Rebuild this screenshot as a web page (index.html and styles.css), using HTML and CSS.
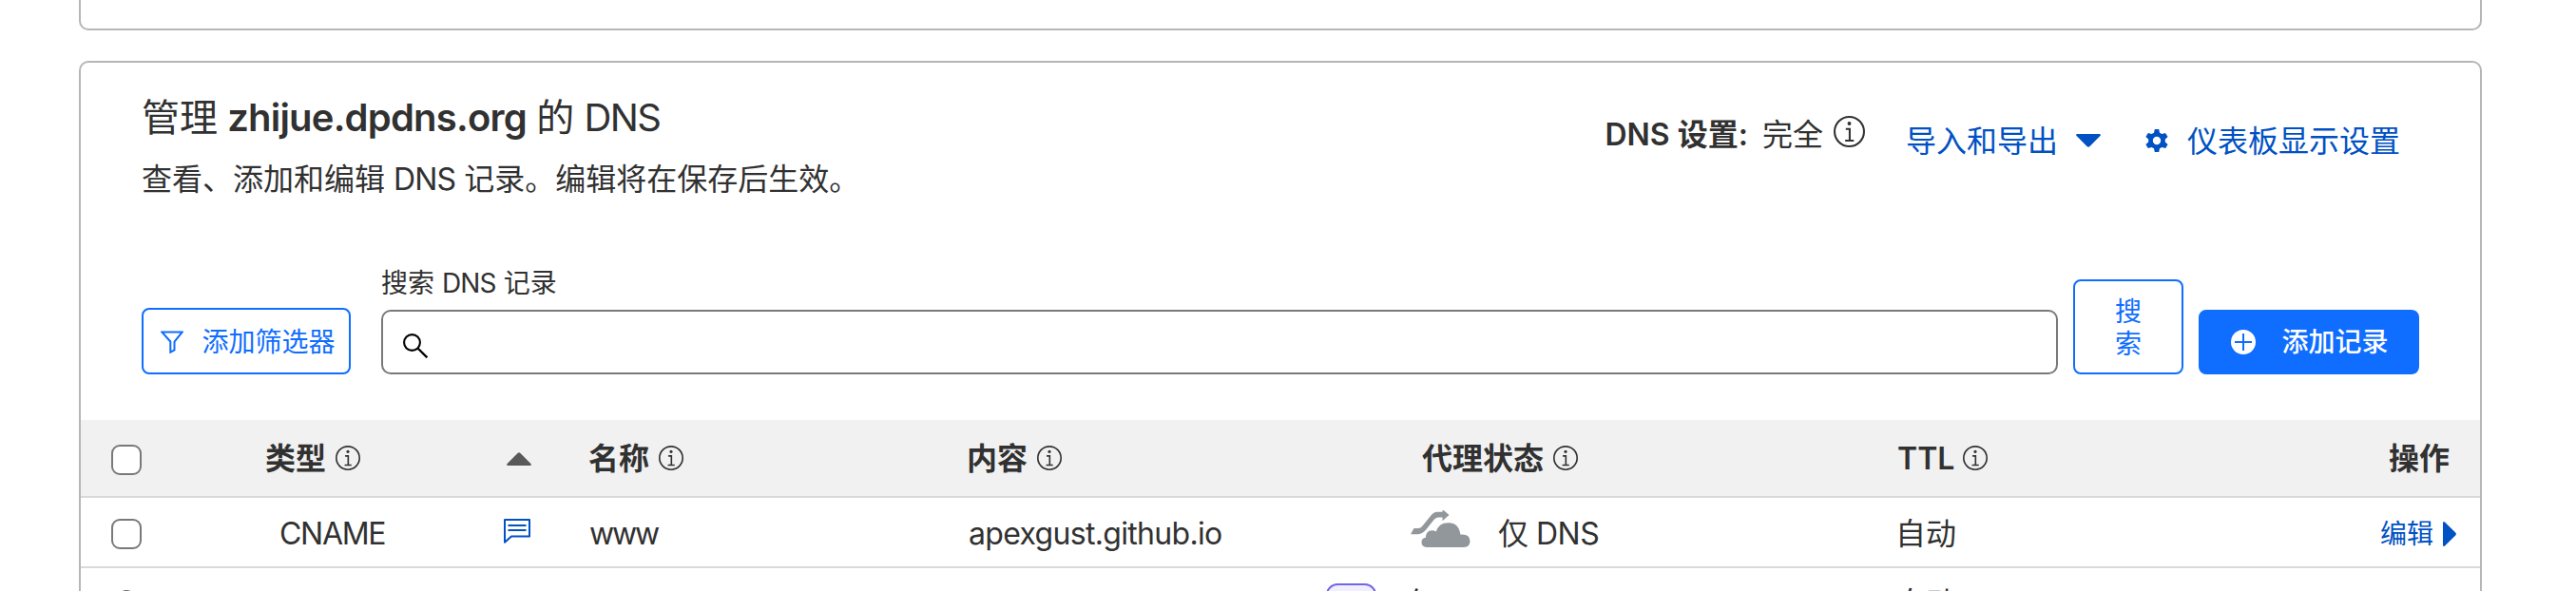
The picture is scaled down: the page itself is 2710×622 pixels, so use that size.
FILE: index.html
```html
<!DOCTYPE html>
<html lang="zh-CN">
<head>
<meta charset="utf-8">
<title>DNS</title>
<link rel="stylesheet" href="styles.css">
</head>
<body>
<svg class="defs" width="0" height="0">
  <symbol id="info" viewBox="0 0 32 32">
    <circle cx="16" cy="16" r="15" fill="none" stroke="currentColor" stroke-width="2"/>
    <circle cx="16" cy="7.8" r="1.9" fill="currentColor"/>
    <path d="M12.4 13.4H16.4V25.3M11.8 25.3H20.6" fill="none" stroke="currentColor" stroke-width="2"/>
  </symbol>
</svg>
<main class="page">
  <section class="card card-prev"></section>
  <section class="card card-dns">
    <header class="head">
      <div class="intro">
        <h1 class="title">管理 <b>zhijue.dpdns.org</b> 的 <span class="tight">DNS</span></h1>
        <p class="desc">查看、添加和编辑 <span class="latin">DNS</span> 记录。编辑将在保存后生效。</p>
      </div>
      <div class="tools">
        <span class="setup"><b>DNS 设置:</b><span class="full">完全</span><svg class="info-lg"><use href="#info"/></svg></span>
        <a class="link export">导入和导出<svg class="caret" viewBox="0 0 26 14"><path d="M1 0H25Q26.6 .6 25.4 2L14.5 13Q13 14.6 11.500 13L.6 2Q-.6 .6 1 0Z" fill="currentColor"/></svg></a>
        <a class="link display"><svg class="gear" viewBox="0 0 24 24"><path fill="currentColor" fill-rule="evenodd" d="M9.800 0H14.200L15 3.700L17.400 5.100L21 3.900L23.600 7.900L20.800 10.600V13.400L23.600 16.100L21.200 20.100L17.400 18.900L15 20.300L14.200 24H9.800L9 20.300L6.600 18.900L2.800 20.100L.4 16.100L3.200 13.400V10.600L.4 7.900L2.800 3.900L6.600 5.100L9 3.700ZM12 7.800A4.200 4.200 0 1 0 12 16.200A4.200 4.200 0 1 0 12 7.800Z"/></svg>仪表板显示设置</a>
      </div>
    </header>
    <div class="controls">
      <button class="btn filter"><svg class="funnel" viewBox="0 0 24 24"><path d="M1.300 1.500H22.700L14.500 11.500V20.300L10.300 22.700V11.500Z" fill="none" stroke="currentColor" stroke-width="2"/></svg>添加筛选器</button>
      <div class="field">
        <label class="label">搜索 <span class="latin">DNS</span> 记录</label>
        <div class="input"><svg class="glass" viewBox="0 0 26 26"><circle cx="9.500" cy="9.500" r="8.400" fill="none" stroke="#000" stroke-width="2.100"/><path d="M15.500 15.500L25.300 25.300" stroke="#000" stroke-width="2.300"/></svg></div>
      </div>
      <button class="btn search">搜<br>索</button>
      <button class="btn add"><svg class="plus" viewBox="0 0 26 26"><circle cx="13" cy="13" r="13" fill="#fff"/><path d="M13 4V22M4 13H22" stroke="#0f6dff" stroke-width="2"/></svg>添加记录</button>
    </div>
    <div class="table">
      <div class="row thead">
        <span class="check"></span>
        <span class="cell">类型<svg class="info"><use href="#info"/></svg></span>
        <span class="cell"><svg class="sort" viewBox="0 0 26 14"><path d="M1 14H25Q26.600 13.400 25.400 12L14.500 1Q13 -.6 11.500 1L.6 12Q-.6 13.400 1 14Z" fill="#595959"/></svg></span>
        <span class="cell">名称<svg class="info"><use href="#info"/></svg></span>
        <span class="cell">内容<svg class="info"><use href="#info"/></svg></span>
        <span class="cell">代理状态<svg class="info"><use href="#info"/></svg></span>
        <span class="cell">TTL<svg class="info info-ttl"><use href="#info"/></svg></span>
        <span class="cell action">操作</span>
      </div>
      <div class="row record">
        <span class="check"></span>
        <span class="cell type">CNAME</span>
        <span class="cell"><svg class="comment" viewBox="0 0 28 26"><path d="M1 1H27V18.500H8L1 24.800Z" fill="none" stroke="#0051c3" stroke-width="2" stroke-linejoin="round"/><path d="M4.500 7H23.500M4.500 12H23.500" stroke="#0051c3" stroke-width="2"/></svg></span>
        <span class="cell name">www</span>
        <span class="cell content">apexgust.github.io</span>
        <span class="cell proxy"><svg class="cloud" viewBox="0 0 63 40" fill="#92979b"><path d="M0 25.200L3.500 19H8Q10.500 19 12.500 16.500L21 6Q24.500 1.800 28 1.800H33.500V0L35 .2L40.500 5L33.500 11.200V7.500H29Q26.500 7.500 24.500 10L17 19.500Q12.500 25.200 8 25.200Z"/><path d="M17 39Q11.500 38.500 11.500 33.800Q11.500 29.500 16 28.800Q16 21.200 22.500 21.200Q25 21.200 26.800 22.600Q29.500 13.200 39.500 13.200Q51 13.200 52.300 25.500Q62.500 24.600 62.500 32.500Q62.500 38.500 56 39Z"/></svg>仅 DNS</span>
        <span class="cell auto">自动</span>
        <span class="cell edit">编辑<svg class="play" viewBox="0 0 14 26"><path d="M0 1Q.6 -.6 2 .6L13.200 11.500Q14.600 13 13.200 14.500L2 25.400Q.6 26.600 0 25Z" fill="currentColor"/></svg></span>
      </div>
      <div class="row next">
        <svg class="status" viewBox="0 0 28 28"><circle cx="14" cy="14" r="12.700" fill="none" stroke="#313131" stroke-width="2"/></svg>
        <span></span>
        <span></span>
        <span></span>
        <span class="cell content-badge"><span class="badge"></span></span>
        <span class="cell next-proxy">仅 DNS</span>
        <span class="cell auto">自动</span>
        <span></span>
      </div>
    </div>
  </section>
</main>
</body>
</html>
```

FILE: styles.css
```css
* { box-sizing: border-box; }
body { margin: 0; background: #fff; color: #313131; font-family: Inter, "Noto Sans CJK SC", sans-serif; font-size: 32px; }
svg { display: block; flex: none; }
.defs { position: absolute; }
.page { width: 2710px; height: 622px; overflow: hidden; padding: 0 99px 0 83px; display: flex; flex-direction: column; gap: 32px; }
.card { border: 2px solid #b6b6b6; border-radius: 10px; flex: none; }
.card-prev { height: 32px; border-top: 0; border-radius: 0 0 10px 10px; }
.card-dns { height: 700px; }
.head { display: flex; justify-content: space-between; height: 196px; padding: 34px 84px 0 64px; }
.title { margin: 0; font-size: 40px; line-height: 48px; font-weight: 400; white-space: nowrap; word-spacing: -1px; }
.title b, .setup b { font-weight: 600; }
.title b { letter-spacing: -.8px; }
.tight { letter-spacing: -1.6px; }
.latin { letter-spacing: -.8px; }
.desc { margin: 17px 0 0; line-height: 48px; white-space: nowrap; }
.tools { display: flex; align-items: flex-start; line-height: 48px; white-space: nowrap; }
.setup { display: flex; align-items: center; padding-top: 18px; }
.full { margin-left: 15px; }
.info-lg { width: 33px; height: 33px; margin: -7px 0 0 11px; }
.link { display: flex; align-items: center; color: #0051c3; padding-top: 25px; }
.export { margin-left: 43px; }
.caret { width: 26px; height: 14px; margin: -2px 0 0 19px; }
.display { margin-left: 47px; }
.gear { width: 24px; height: 24px; margin: -2px 20px 0 0; }
.controls { display: flex; align-items: flex-end; height: 132px; padding: 0 64px 0 64px; font-size: 28px; }
.btn { font: 400 28px/34px Inter, "Noto Sans CJK SC", sans-serif; background: #fff; color: #0f6dff; border: 2px solid #0f6dff; border-radius: 8px; display: flex; align-items: center; justify-content: center; padding: 0; white-space: nowrap; flex: none; }
.filter { width: 220px; height: 70px; padding: 1px 0 0 4px; gap: 19px; }
.funnel { width: 24px; height: 24px; }
.field { flex: 1; margin-left: 32px; }
.label { display: block; line-height: 34px; margin-bottom: 11px; }
.input { height: 68px; border: 2px solid #797979; border-radius: 10px; display: flex; align-items: center; padding: 7px 0 0 21px; }
.glass { width: 26px; height: 26px; }
.search { width: 116px; height: 100px; margin-left: 16px; padding-top: 1px; }
.add { width: 232px; height: 68px; margin-left: 16px; padding-left: 2px; background: #0f6dff; color: #fff; font-weight: 500; gap: 27px; }
.plus { width: 26px; height: 26px; }
.table { margin-top: 48px; }
.row { display: grid; grid-template-columns: 162px 250px 90px 398px 479px 500px 460px 1fr; padding-left: 32px; border-bottom: 2px solid #d9d9d9; align-items: center; white-space: nowrap; }
.thead { height: 82px; padding-top: 1px; background: #f1f1f1; font-weight: 600; }
.record { height: 74px; padding-top: 3px; }
.check { width: 32px; height: 32px; background: #fff; border: 2px solid #797979; border-radius: 9px; }
.thead .check { margin-top: 3px; }
.cell { display: flex; align-items: center; line-height: 48px; }
.info { width: 26px; height: 26px; margin: -1px 0 0 10px; }
.info-ttl { margin-left: 9px; }
.sort { width: 26px; height: 14px; margin-left: 4px; }
.type { padding-left: 15px; letter-spacing: -1.3px; }
.name { letter-spacing: -2.2px; padding-left: 1px; }
.content { letter-spacing: -.68px; padding-left: 2px; }
.comment { width: 28px; height: 26px; margin: -5px 0 0 1px; }
.proxy { gap: 29px; letter-spacing: -.5px; }
.cloud { width: 63px; height: 40px; margin: -9px 0 0 -12px; }
.auto { margin-left: -2px; }
.action { justify-content: flex-end; padding-right: 32px; }
.edit { justify-content: flex-end; padding-right: 25px; font-size: 28px; color: #0051c3; gap: 10px; }
.play { width: 14px; height: 26px; }
.next { height: 76px; }
.status { width: 28px; height: 28px; margin-left: 2px; }
.content-badge { justify-content: flex-end; padding-right: 48px; }
.badge { width: 53px; height: 42px; border: 2px solid #7366e4; border-radius: 12px; background: #f1effd; }
.next-proxy { margin-left: -16px; }
```
